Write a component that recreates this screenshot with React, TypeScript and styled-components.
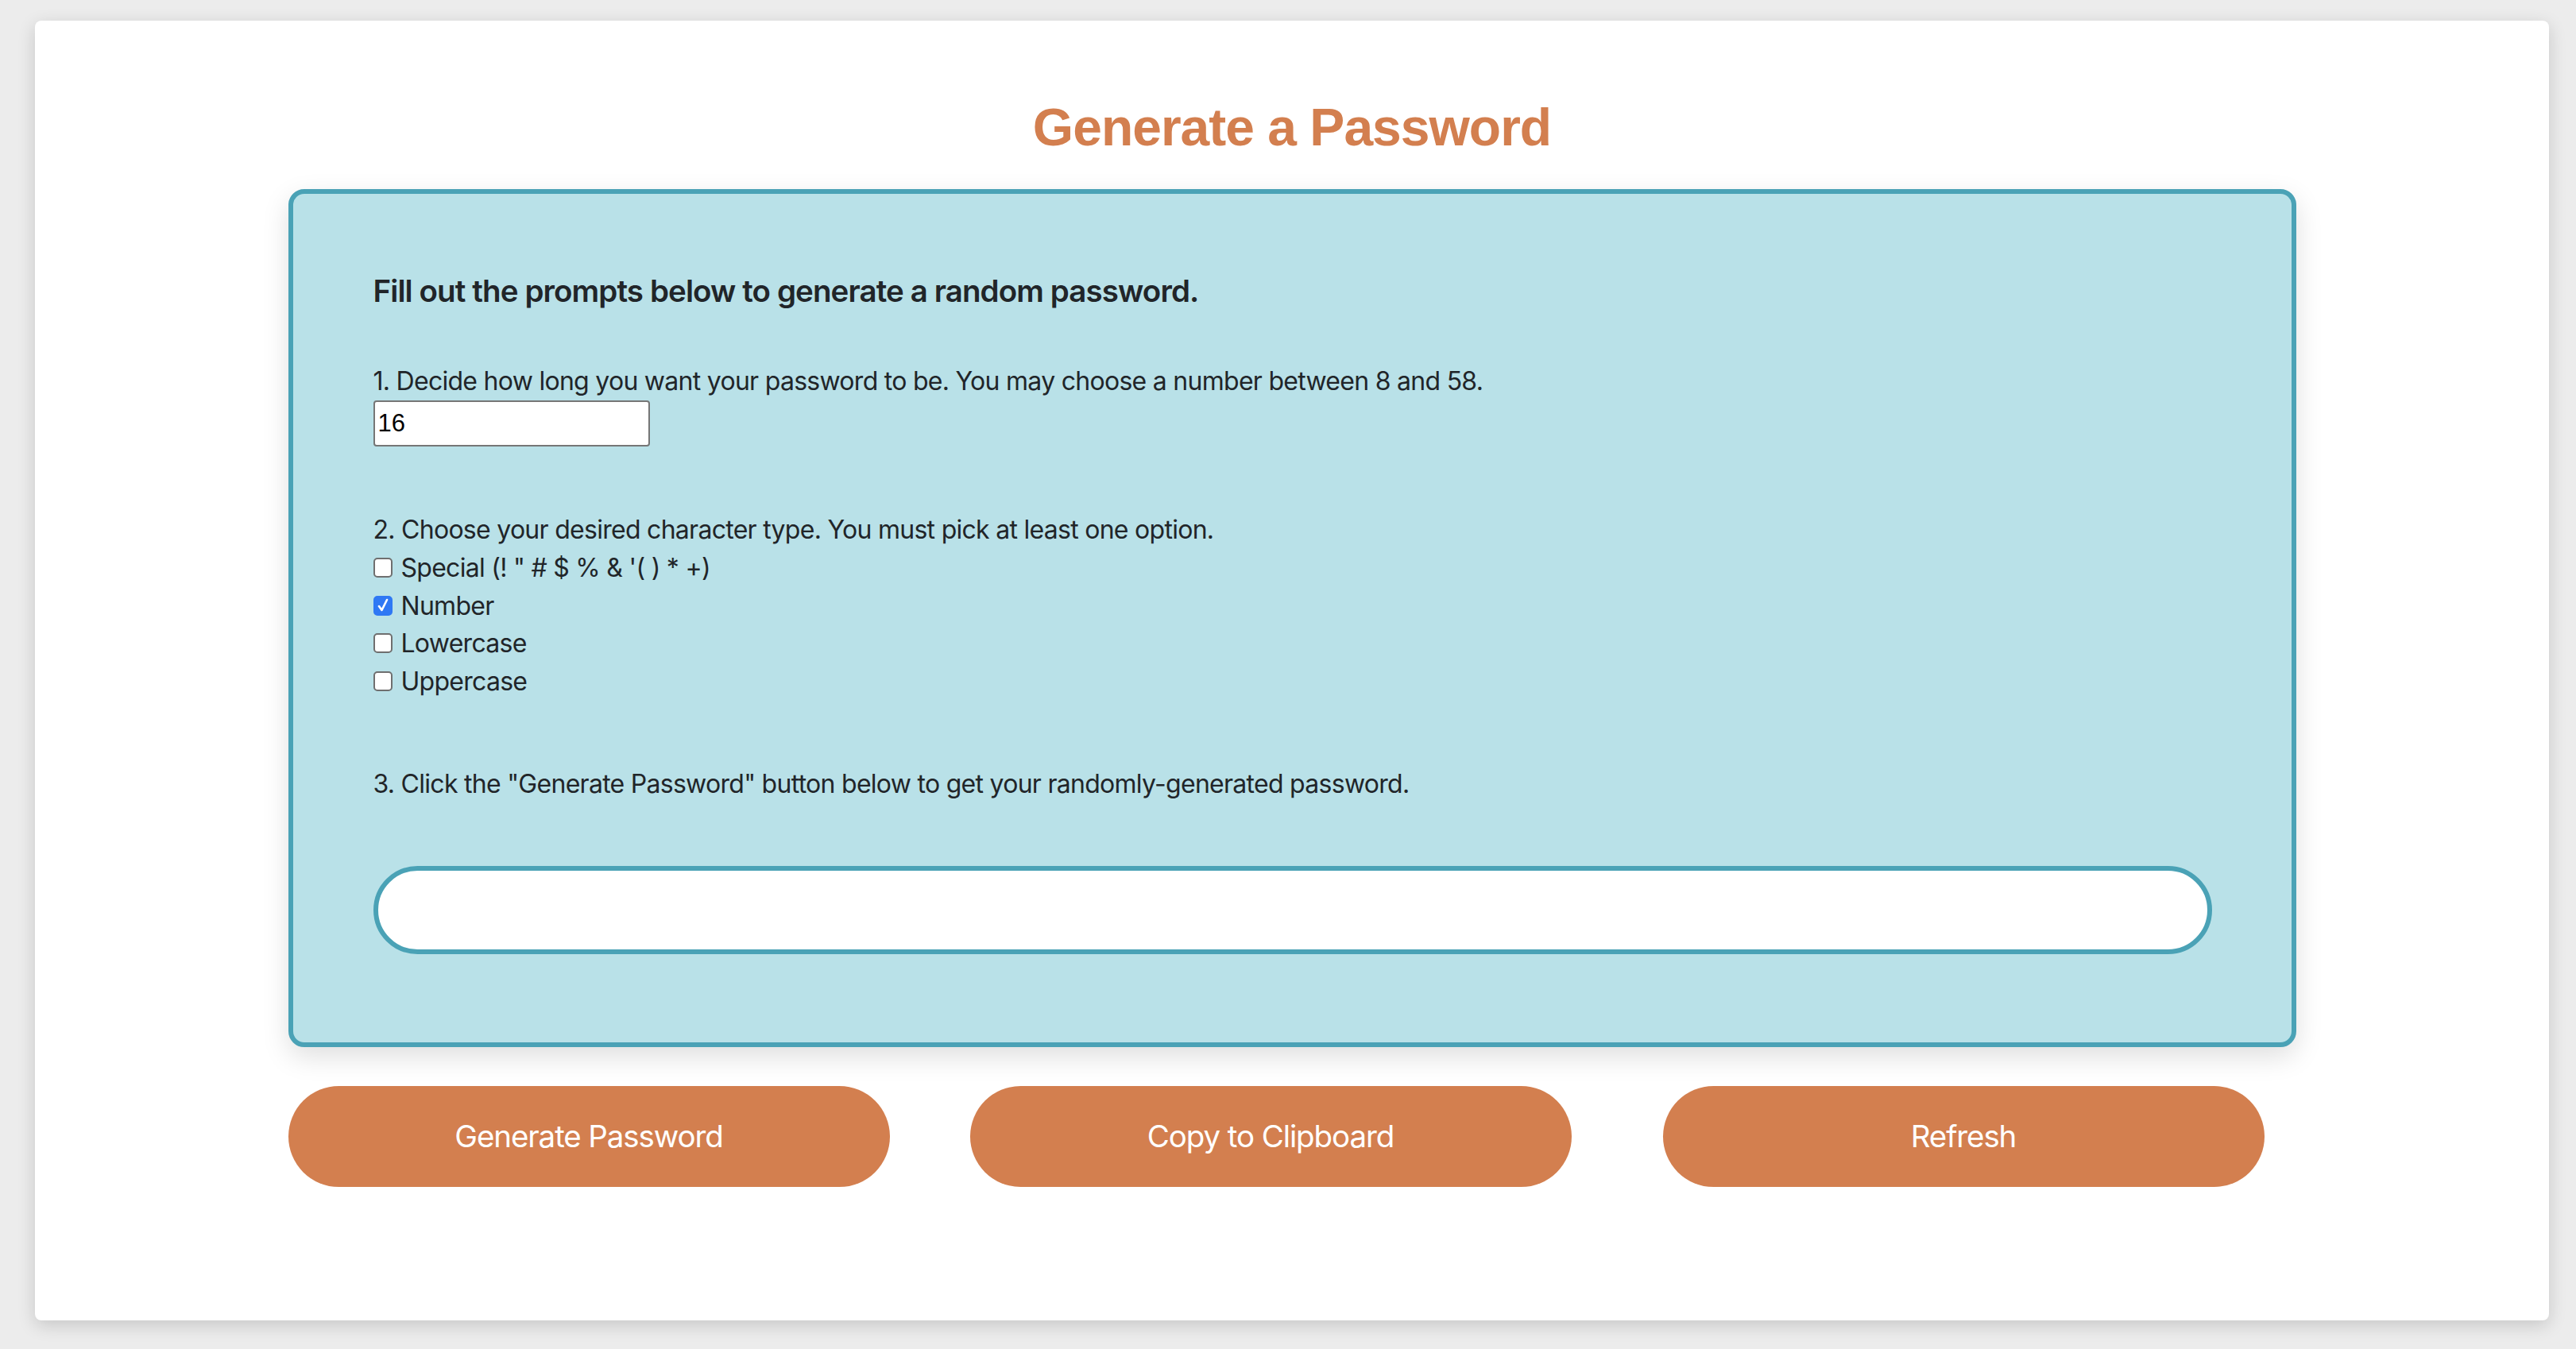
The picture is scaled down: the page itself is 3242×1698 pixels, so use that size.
import React, { useState } from "react";
import styled, { createGlobalStyle } from "styled-components";

const ORANGE = "#d37f4f";
const TEAL = "#4aa2b6";
const PANEL_BG = "#b9e1e8";
const TEXT = "#212529";

const GlobalStyle = createGlobalStyle`
  html, body {
    margin: 0;
    padding: 0;
    background: #ececec;
  }
  body {
    font-family: Inter, "Noto Sans", "Liberation Sans", sans-serif;
    color: ${TEXT};
  }
  * { box-sizing: border-box; }
`;

const Page = styled.div`
  padding: 26px 34px 35px 44px;
`;

const Card = styled.main`
  background: #ffffff;
  border-radius: 8px;
  box-shadow: 0 6px 22px rgba(0, 0, 0, 0.16);
  padding: 94px 0 168px;
  display: flex;
  flex-direction: column;
  align-items: center;
`;

const Title = styled.h1`
  margin: 0 0 38px;
  font-family: "Liberation Sans", Arial, sans-serif;
  font-weight: 700;
  font-size: 66px;
  line-height: 80px;
  letter-spacing: -1px;
  color: ${ORANGE};
`;

const Panel = styled.section`
  width: 2527px;
  background: ${PANEL_BG};
  border: 6px solid ${TEAL};
  border-radius: 20px;
  box-shadow: 0 12px 34px rgba(0, 0, 0, 0.13);
  padding: 98px 100px 111px 101px;
  display: flex;
  flex-direction: column;
`;

const Lead = styled.h5`
  margin: 0 0 66px;
  font-weight: 600;
  font-size: 38.5px;
  line-height: 48px;
  letter-spacing: -0.9px;
`;

const Prompt = styled.p`
  margin: 0;
  font-weight: 400;
  font-size: 32px;
  line-height: 48px;
  letter-spacing: -0.72px;
`;

const Step = styled.div<{ $gap: number }>`
  display: flex;
  flex-direction: column;
  align-items: flex-start;
  margin-bottom: ${(p) => p.$gap}px;
`;

const LengthInput = styled.input`
  width: 348px;
  height: 58px;
  border: 2px solid #767676;
  border-radius: 4px;
  background: #ffffff;
  padding: 0 4px;
  font-family: "Liberation Sans", Arial, sans-serif;
  font-size: 31px;
  color: #000;
  outline: none;
`;

const OptionList = styled.div`
  display: flex;
  flex-direction: column;
`;

const OptionRow = styled.label`
  display: flex;
  align-items: center;
  height: 47.6px;
  font-size: 32px;
  letter-spacing: -0.72px;
  cursor: pointer;
`;

const HiddenInput = styled.input`
  position: absolute;
  opacity: 0;
  width: 0;
  height: 0;
  margin: 0;
`;

const Box = styled.span<{ $checked: boolean }>`
  width: 24px;
  height: 25px;
  margin-right: 11px;
  border-radius: 5px;
  border: 2px solid ${(p) => (p.$checked ? "#2f78f4" : "#6f6f6f")};
  background: ${(p) => (p.$checked ? "#2f78f4" : "#ffffff")};
  display: flex;
  align-items: center;
  justify-content: center;
  flex-shrink: 0;
`;

const Output = styled.textarea`
  width: 100%;
  height: 111px;
  border: 6px solid ${TEAL};
  border-radius: 56px;
  background: #ffffff;
  resize: none;
  outline: none;
  padding: 30px 40px;
  font-family: inherit;
  font-size: 32px;
  display: block;
`;

const ButtonRow = styled.div`
  width: 2527px;
  margin-top: 49px;
  display: flex;
`;

const ActionButton = styled.button<{ $offset: number }>`
  width: 757px;
  height: 127px;
  margin-left: ${(p) => p.$offset}px;
  border: none;
  border-radius: 64px;
  background: ${ORANGE};
  color: #ffffff;
  font-family: Inter, "Noto Sans", sans-serif;
  font-weight: 400;
  font-size: 38.5px;
  letter-spacing: -1.1px;
  cursor: pointer;
`;

type Opt = { key: string; label: string };
const OPTIONS: Opt[] = [
  { key: "special", label: "Special (! \" # $ % & '( ) * +)" },
  { key: "number", label: "Number" },
  { key: "lower", label: "Lowercase" },
  { key: "upper", label: "Uppercase" },
];

function Checkbox({ checked, onChange, label }: { checked: boolean; onChange: () => void; label: string }) {
  return (
    <OptionRow>
      <HiddenInput type="checkbox" checked={checked} onChange={onChange} />
      <Box $checked={checked}>
        {checked && (
          <svg width="14" height="18" viewBox="0 0 14 18">
            <path d="M2 10 L5.5 15 L12 2" fill="none" stroke="#fff" strokeWidth="2.6" strokeLinecap="round" strokeLinejoin="round" />
          </svg>
        )}
      </Box>
      {label}
    </OptionRow>
  );
}

export default function App() {
  const [length, setLength] = useState("16");
  const [opts, setOpts] = useState<Record<string, boolean>>({ special: false, number: true, lower: false, upper: false });
  const [password, setPassword] = useState("");

  const generate = () => {
    let pool = "";
    if (opts.special) pool += "!\"#$%&'()*+";
    if (opts.number) pool += "0123456789";
    if (opts.lower) pool += "abcdefghijklmnopqrstuvwxyz";
    if (opts.upper) pool += "ABCDEFGHIJKLMNOPQRSTUVWXYZ";
    const n = Math.min(58, Math.max(8, parseInt(length, 10) || 8));
    if (!pool) return;
    let out = "";
    for (let i = 0; i < n; i++) out += pool[Math.floor(Math.random() * pool.length)];
    setPassword(out);
  };

  return (
    <Page>
      <GlobalStyle />
      <Card>
        <Title>Generate a Password</Title>
        <Panel>
          <Lead>Fill out the prompts below to generate a random password.</Lead>
          <Step $gap={81}>
            <Prompt>1. Decide how long you want your password to be. You may choose a number between 8 and 58.</Prompt>
            <LengthInput value={length} onChange={(e) => setLength(e.target.value)} />
          </Step>
          <Step $gap={81.6}>
            <Prompt>2. Choose your desired character type. You must pick at least one option.</Prompt>
            <OptionList>
              {OPTIONS.map((o) => (
                <Checkbox
                  key={o.key}
                  label={o.label}
                  checked={opts[o.key]}
                  onChange={() => setOpts({ ...opts, [o.key]: !opts[o.key] })}
                />
              ))}
            </OptionList>
          </Step>
          <Step $gap={78.6}>
            <Prompt>3. Click the "Generate Password" button below to get your randomly-generated password.</Prompt>
          </Step>
          <Output readOnly value={password} />
        </Panel>
        <ButtonRow>
          <ActionButton $offset={0} onClick={generate}>Generate Password</ActionButton>
          <ActionButton $offset={101} onClick={() => navigator.clipboard?.writeText(password)}>Copy to Clipboard</ActionButton>
          <ActionButton $offset={115} onClick={() => setPassword("")}>Refresh</ActionButton>
        </ButtonRow>
      </Card>
    </Page>
  );
}
